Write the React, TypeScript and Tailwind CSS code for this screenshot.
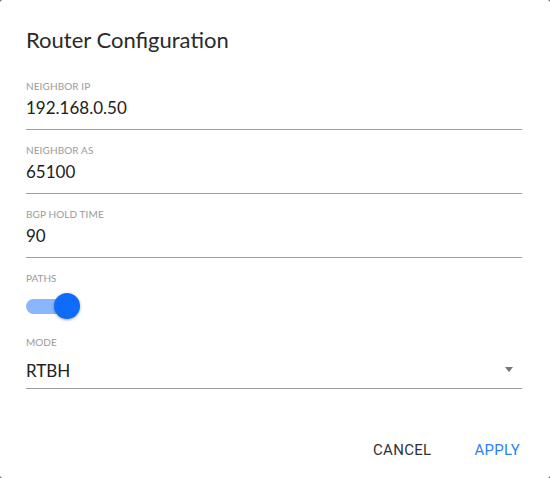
import { useState } from "react";

type FieldProps = { label: string; value: string };

function TextField({ label, value }: FieldProps) {
  return (
    <div className="h-[64px] flex flex-col">
      <label className="text-[10px] leading-[12px] text-[#9a9a9a] uppercase tracking-[0.01em]">
        {label}
      </label>
      <div className="mt-[4px] text-[17px] leading-[24px] text-[#212121] border-b border-[#9e9e9e] pb-[9px]">
        {value}
      </div>
    </div>
  );
}

function Toggle({ on, onChange }: { on: boolean; onChange: () => void }) {
  return (
    <button
      onClick={onChange}
      className="relative w-[56px] h-[26px] flex items-center"
    >
      <span
        className={`block h-[15px] w-[50px] rounded-full ${
          on ? "bg-[#8ab6fd]" : "bg-[#bdbdbd]"
        }`}
      />
      <span
        className={`absolute top-0 h-[26px] w-[26px] rounded-full shadow-[0_1px_3px_rgba(0,0,0,0.35)] ${
          on ? "left-[28px] bg-[#0f6cfa]" : "left-0 bg-[#fafafa]"
        }`}
      />
    </button>
  );
}

function App() {
  const [paths, setPaths] = useState(true);
  return (
    <div className="w-[550px] h-[478px] bg-[#666]">
      <div
        className="w-full h-full bg-white rounded-[3px] px-[26px] pt-[25px] flex flex-col"
        style={{ fontFamily: "Lato, 'Noto Sans', sans-serif" }}
      >
        <h2 className="text-[22px] leading-[30px] text-[#2a2a2a]">Router Configuration</h2>
        <div className="mt-[25px] w-[496px]">
          <TextField label="Neighbor IP" value="192.168.0.50" />
          <TextField label="Neighbor AS" value="65100" />
          <TextField label="BGP Hold Time" value="90" />
          <div className="h-[64px]">
            <label className="block text-[10px] leading-[12px] text-[#9a9a9a] uppercase">
              Paths
            </label>
            <div className="mt-[9px]">
              <Toggle on={paths} onChange={() => setPaths(!paths)} />
            </div>
          </div>
          <div className="flex flex-col">
            <label className="text-[10px] leading-[12px] text-[#9a9a9a] uppercase">
              Mode
            </label>
            <div className="mt-[11px] flex items-center justify-between text-[17px] leading-[24px] text-[#212121] border-b border-[#9e9e9e] pb-[5px]">
              <span>RTBH</span>
              <svg width="8" height="5" viewBox="0 0 8 5" className="mr-[9px] mt-[-3px]">
                <path d="M0 0 L8 0 L4 5 Z" fill="#757575" />
              </svg>
            </div>
          </div>
        </div>
        <div className="mt-auto mb-[10px] flex justify-end gap-[23px] w-[496px]">
          <button
            className="px-[10px] h-[36px] text-[15px] tracking-[0.02em] text-[#333] uppercase"
            style={{ fontFamily: "Roboto, 'Noto Sans', sans-serif" }}
          >
            Cancel
          </button>
          <button
            className="pl-[10px] pr-[2px] h-[36px] text-[15px] tracking-[0.02em] text-[#2c80f7] uppercase"
            style={{ fontFamily: "Roboto, 'Noto Sans', sans-serif" }}
          >
            Apply
          </button>
        </div>
      </div>
    </div>
  );
}

export default App;
